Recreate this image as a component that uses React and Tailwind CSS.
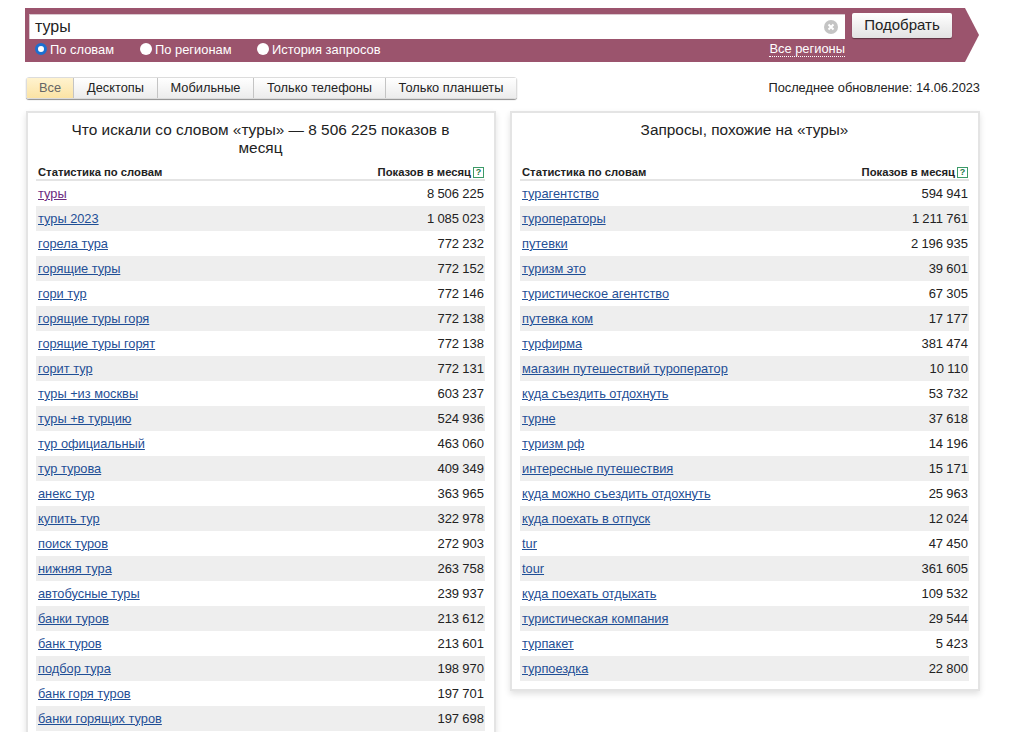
import { useState } from "react";

const leftRows = [
  ["туры", "8 506 225"],
  ["туры 2023", "1 085 023"],
  ["горела тура", "772 232"],
  ["горящие туры", "772 152"],
  ["гори тур", "772 146"],
  ["горящие туры горя", "772 138"],
  ["горящие туры горят", "772 138"],
  ["горит тур", "772 131"],
  ["туры +из москвы", "603 237"],
  ["туры +в турцию", "524 936"],
  ["тур официальный", "463 060"],
  ["тур турова", "409 349"],
  ["анекс тур", "363 965"],
  ["купить тур", "322 978"],
  ["поиск туров", "272 903"],
  ["нижняя тура", "263 758"],
  ["автобусные туры", "239 937"],
  ["банки туров", "213 612"],
  ["банк туров", "213 601"],
  ["подбор тура", "198 970"],
  ["банк горя туров", "197 701"],
  ["банки горящих туров", "197 698"],
];

const rightRows = [
  ["турагентство", "594 941"],
  ["туроператоры", "1 211 761"],
  ["путевки", "2 196 935"],
  ["туризм это", "39 601"],
  ["туристическое агентство", "67 305"],
  ["путевка ком", "17 177"],
  ["турфирма", "381 474"],
  ["магазин путешествий туроператор", "10 110"],
  ["куда съездить отдохнуть", "53 732"],
  ["турне", "37 618"],
  ["туризм рф", "14 196"],
  ["интересные путешествия", "15 171"],
  ["куда можно съездить отдохнуть", "25 963"],
  ["куда поехать в отпуск", "12 024"],
  ["tur", "47 450"],
  ["tour", "361 605"],
  ["куда поехать отдыхать", "109 532"],
  ["туристическая компания", "29 544"],
  ["турпакет", "5 423"],
  ["турпоездка", "22 800"],
];

const tabs = ["Все", "Десктопы", "Мобильные", "Только телефоны", "Только планшеты"];
const tabWidths = ["w-[47px]", "w-[84px]", "w-[96px]", "w-[132px]", "w-[130px]"];
const modes = ["По словам", "По регионам", "История запросов"];
const modeWidths = ["w-[105px]", "w-[117px]", "w-auto"];

const StatsPanel = ({ title, rows, visited, className }) => (
  <div className={`w-[470px] bg-white border-2 border-[#e4e4e4] shadow-[0_3px_6px_rgba(0,0,0,0.12)] pl-[8px] pr-[9px] ${className}`}>
    <h2 className="text-[15.4px] leading-[18px] text-[#222] text-center pt-[8px] px-[20px] h-[50px] font-normal">
      {title}
    </h2>
    <div className="flex justify-between items-center h-[18px] border-b-2 border-[#e4e4e4] pt-[2px] pl-[2px] pr-[1px] text-[11.25px] font-bold text-[#222]">
      <span>Статистика по словам</span>
      <span className="flex items-center gap-[2px]">
        Показов в месяц
        <span className="w-[11px] h-[11px] border border-[#3c9a68] text-[#1f7a4a] text-[9px] leading-[9px] text-center">?</span>
      </span>
    </div>
    {rows.map(([phrase, count], i) => (
      <div
        key={phrase}
        className={`flex justify-between items-center h-[25px] pl-[2px] pr-[1px] ${i % 2 ? "bg-[#eeeeee]" : "bg-white"}`}
      >
        <a href="#" className={`text-[12.8px] underline ${visited && i === 0 ? "text-[#6b2a7f]" : "text-[#1f4f96]"}`}>
          {phrase}
        </a>
        <span className="text-[13px] text-[#222] [word-spacing:-0.4px]">{count}</span>
      </div>
    ))}
  </div>
);

export default function App() {
  const [mode, setMode] = useState(0);
  const [tab, setTab] = useState(0);

  return (
    <div className="h-[732px] overflow-hidden bg-white font-['Liberation_Sans',Arial,sans-serif]">
      {/* Search band */}
      <div className="pt-[8px] pl-[25px]">
        <div className="w-[954px] h-[54px] bg-[#9b546d] pt-[6px] pl-[4px] [clip-path:polygon(0_0,940px_0,954px_50%,940px_100%,0_100%)]">
          <div className="flex items-start gap-[7px]">
            <div className="w-[816px] h-[25px] bg-white flex items-center justify-between pl-[5px] pr-[7px] border-t border-l border-[#d9c6cd]">
              <span className="text-[16px] text-[#222]">туры</span>
              <svg width="14" height="14" viewBox="0 0 14 14">
                <circle cx="7" cy="7" r="7" fill="#c4c4c4" />
                <path d="M4.5 4.5l5 5M9.5 4.5l-5 5" stroke="#fff" strokeWidth="2" />
              </svg>
            </div>
            <button className="w-[100px] h-[25px] -mt-[1px] rounded-[2px] bg-gradient-to-b from-white to-[#e2e2e2] text-[15px] text-[#222] shadow-[0_1px_1px_rgba(0,0,0,0.4)]">
              Подобрать
            </button>
          </div>
          <div className="flex items-center h-[21px] pl-[6px] pr-[134px] text-[12.9px] text-white">
            {modes.map((m, i) => (
              <label key={m} onClick={() => setMode(i)} className={`flex items-center gap-[3px] ${modeWidths[i]}`}>
                <span className={`w-[12px] h-[12px] rounded-full bg-white ${mode === i ? "border-[3px] border-[#1b6fd0]" : ""}`} />
                {m}
              </label>
            ))}
            <a href="#" className="ml-auto leading-[14px] border-b border-dotted border-white">Все регионы</a>
          </div>
        </div>
      </div>

      {/* Device tabs */}
      <div className="flex items-center justify-between mt-[15px] pl-[26px] pr-[31px]">
        <div className="flex h-[22px] rounded-[3px] shadow-[0_1px_1px_rgba(0,0,0,0.45)] border border-[#dcdcdc]">
          {tabs.map((t, i) => (
            <button
              key={t}
              onClick={() => setTab(i)}
              className={`${tabWidths[i]} text-[12.8px] border-r border-[#c4c4c4] last:border-r-0 ${
                tab === i
                  ? "bg-gradient-to-b from-[#fff3cf] to-[#fbe3a4] text-[#666]"
                  : "bg-gradient-to-b from-white to-[#ececec] text-[#222]"
              }`}
            >
              {t}
            </button>
          ))}
        </div>
        <span className="text-[12.8px] text-[#222]">Последнее обновление: 14.06.2023</span>
      </div>

      {/* Stats */}
      <div className="flex items-start gap-[14px] mt-[12px] pl-[26px]">
        <StatsPanel title="Что искали со словом «туры» — 8 506 225 показов в месяц" rows={leftRows} visited className="pb-[20px]" />
        <StatsPanel title="Запросы, похожие на «туры»" rows={rightRows} className="pb-[8px]" />
      </div>
    </div>
  );
}
